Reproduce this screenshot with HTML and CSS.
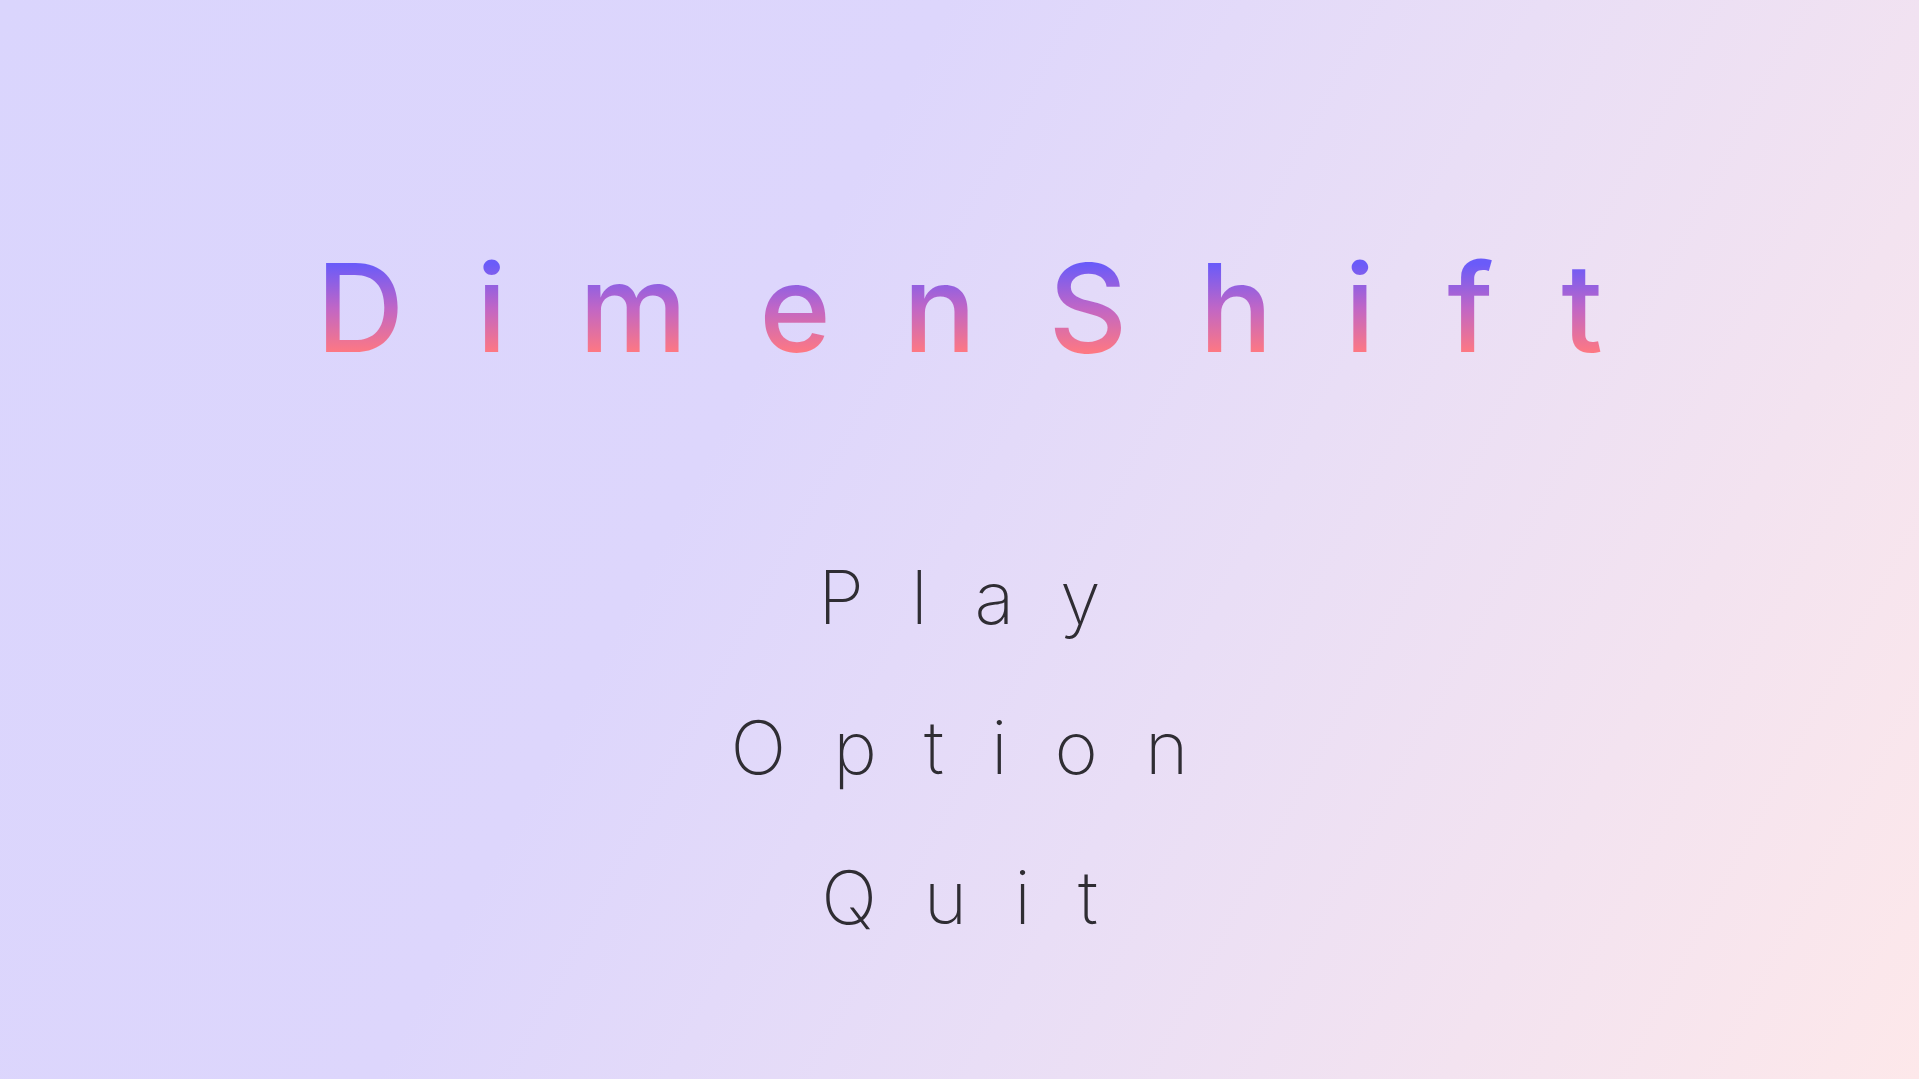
FILE: index.html
```html
<!DOCTYPE html>
<html lang="en">
<head>
<meta charset="utf-8">
<title>DimenShift</title>
<link rel="stylesheet" href="styles.css">
</head>
<body>
<main class="screen">
  <h1 class="title">DimenShift</h1>
  <nav class="menu">
    <a class="menu-item" href="#">Play</a>
    <a class="menu-item" href="#">Option</a>
    <a class="menu-item" href="#">Quit</a>
  </nav>
</main>
</body>
</html>
```
FILE: styles.css
```css
html, body {
  margin: 0;
  padding: 0;
  height: 100%;
}

body {
  background: linear-gradient(118deg, #dad5fd 0%, #ddd6fc 38%, #e9def6 62%, #fde8ea 100%);
  font-family: "Inter", "Liberation Sans", sans-serif;
  overflow: hidden;
}

.screen {
  display: flex;
  flex-direction: column;
  align-items: center;
  height: 100%;
  box-sizing: border-box;
  padding-top: 247px;
}

.title {
  margin: 0;
  font-size: 122px;
  line-height: 1;
  font-weight: 500;
  letter-spacing: 72px;
  padding-left: 72px;
  background: linear-gradient(180deg, #6a5bf9 14%, #c066c6 50%, #fd7883 86%);
  -webkit-background-clip: text;
  background-clip: text;
  color: transparent;
}

.menu {
  display: flex;
  flex-direction: column;
  align-items: center;
  gap: 76px;
  margin-top: 191px;
}

.menu-item {
  display: block;
  font-size: 74px;
  line-height: 1;
  font-weight: 200;
  letter-spacing: 47px;
  padding-left: 47px;
  color: #2f2d33;
  text-decoration: none;
}
```
